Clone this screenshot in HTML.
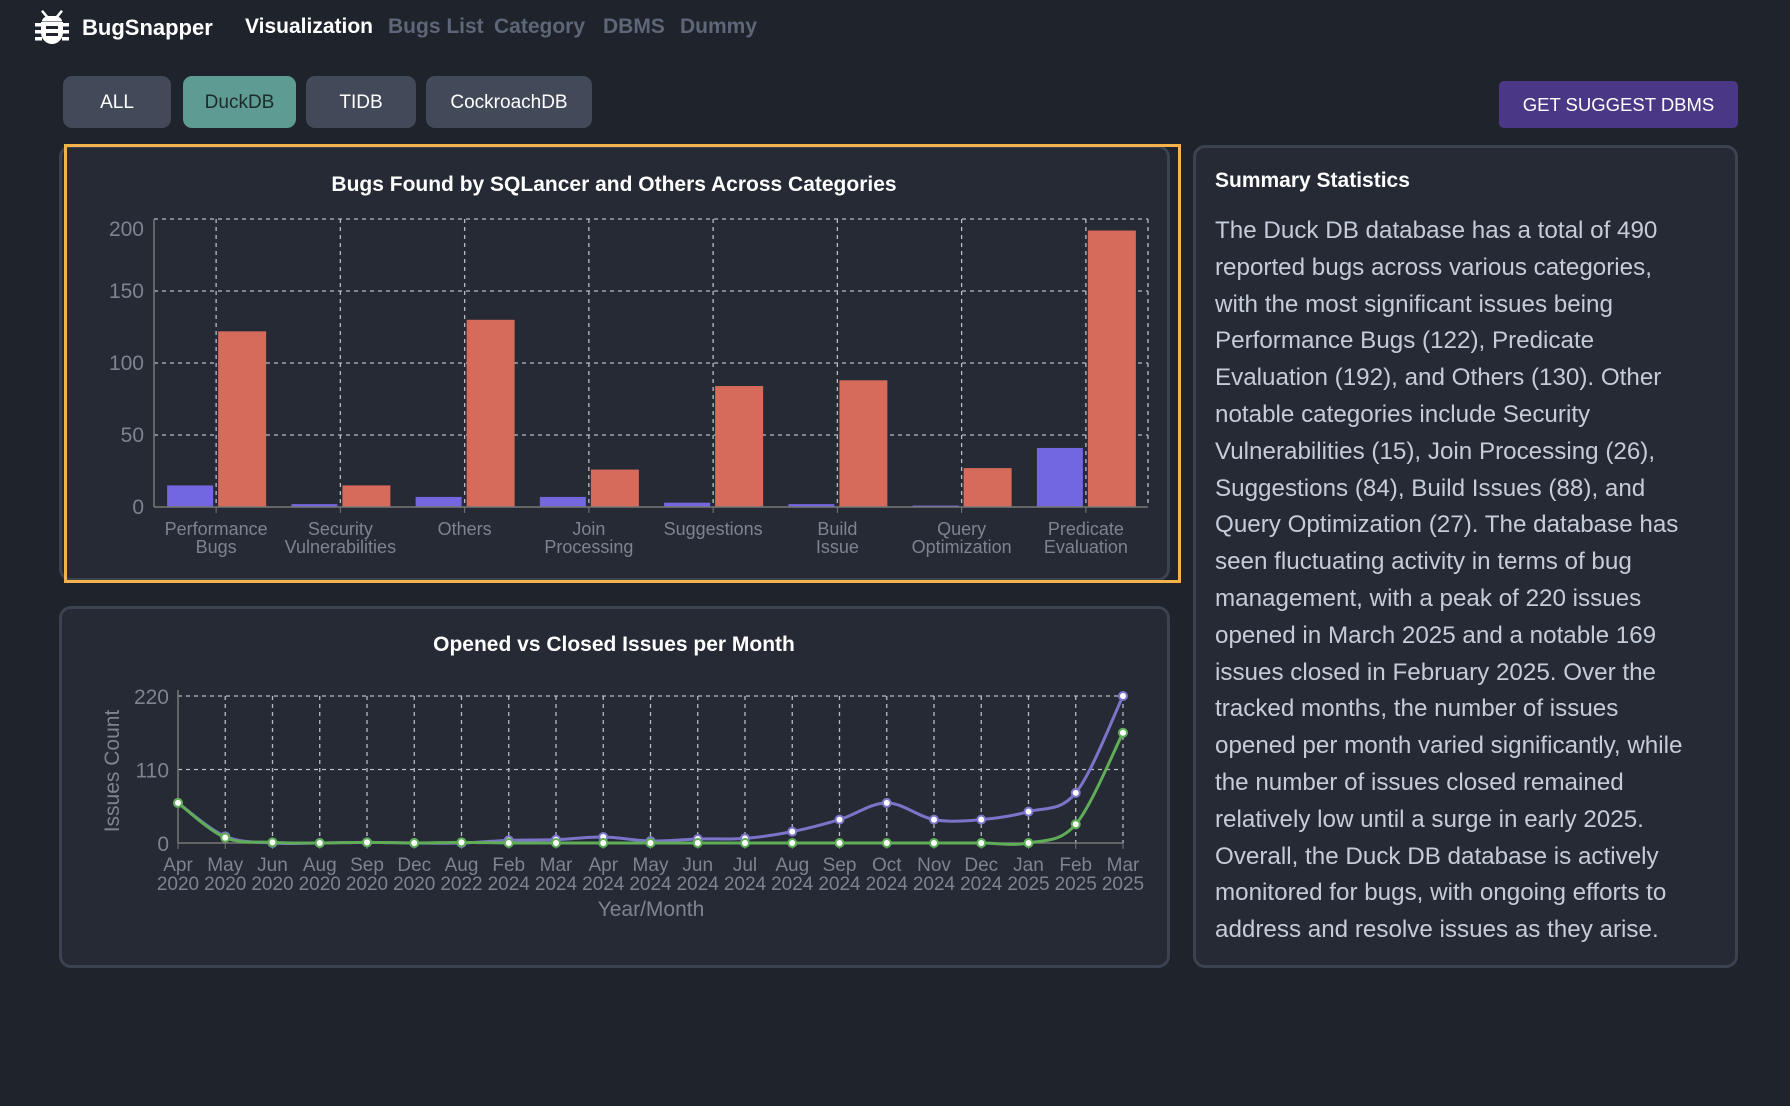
<!DOCTYPE html>
<html><head><meta charset="utf-8"><style>
*{margin:0;padding:0;box-sizing:border-box}
body{width:1790px;height:1106px;background:#1f232c;font-family:"Liberation Sans",sans-serif;position:relative;overflow:hidden;color:#fff}
.a{position:absolute}
.nav{top:15px;font-size:21px;font-weight:bold;color:#5d6778}
.btn{position:absolute;top:76px;height:52px;border-radius:9px;background:#424a59;color:#fff;font-size:19px;display:flex;align-items:center;justify-content:center;padding-top:2px}
.panel{position:absolute;background:#252a35;border:3px solid #3b4250;border-radius:12px}
.sum{position:absolute;left:1215px;top:213px;font-size:24.2px;line-height:36.8px;color:#c5ccd9;white-space:nowrap}
</style></head><body>
<svg class="a" style="left:34px;top:8px" width="36" height="38" viewBox="0 0 36 38">
<g fill="#fff"><path d="M9 2l5 6h8l5-6 2 1.5-4.5 5.5c2.5 1 3.5 2.5 3.5 4.5H8c0-2 1-3.5 3.5-4.5L7 3.5z"/>
<path d="M7 14h22v10c0 7-5 12-11 12S7 31 7 24z"/>
<rect x="1" y="15" width="6" height="3.5"/><rect x="29" y="15" width="6" height="3.5"/>
<rect x="1" y="22" width="6" height="3.5"/><rect x="29" y="22" width="6" height="3.5"/>
<rect x="1" y="29" width="7" height="3.5"/><rect x="28" y="29" width="7" height="3.5"/></g>
<rect x="12" y="18" width="12" height="3" fill="#1f232c"/><rect x="12" y="25" width="12" height="3" fill="#1f232c"/>
</svg>
<div class="a nav" style="left:82px;color:#fff;font-size:22px">BugSnapper</div>
<div class="a nav" style="left:245px;color:#fff">Visualization</div>
<div class="a nav" style="left:388px">Bugs List</div>
<div class="a nav" style="left:494px">Category</div>
<div class="a nav" style="left:603px">DBMS</div>
<div class="a nav" style="left:680px">Dummy</div>
<div class="btn" style="left:63px;width:108px">ALL</div>
<div class="btn" style="left:183px;width:113px;background:#5e9b93;color:#1d2a2a">DuckDB</div>
<div class="btn" style="left:306px;width:110px">TIDB</div>
<div class="btn" style="left:426px;width:166px">CockroachDB</div>
<div class="a" style="left:1499px;top:81px;width:239px;height:47px;background:#4a3886;border-radius:5px;color:#fff;font-size:18.5px;display:flex;align-items:center;justify-content:center">GET SUGGEST DBMS</div>

<div class="panel" style="left:59px;top:145px;width:1111px;height:436px"></div>
<div class="a" style="left:64px;top:144px;width:1117px;height:439px;border:3px solid #f3b24c"></div>
<div class="panel" style="left:59px;top:606px;width:1111px;height:362px"></div>
<div class="panel" style="left:1193px;top:145px;width:545px;height:823px"></div>
<div class="a" style="left:1215px;top:169px;font-size:21px;font-weight:bold">Summary Statistics</div>
<div class="sum">The Duck DB database has a total of 490<br>reported bugs across various categories,<br>with the most significant issues being<br>Performance Bugs (122), Predicate<br>Evaluation (192), and Others (130). Other<br>notable categories include Security<br>Vulnerabilities (15), Join Processing (26),<br>Suggestions (84), Build Issues (88), and<br>Query Optimization (27). The database has<br>seen fluctuating activity in terms of bug<br>management, with a peak of 220 issues<br>opened in March 2025 and a notable 169<br>issues closed in February 2025. Over the<br>tracked months, the number of issues<br>opened per month varied significantly, while<br>the number of issues closed remained<br>relatively low until a surge in early 2025.<br>Overall, the Duck DB database is actively<br>monitored for bugs, with ongoing efforts to<br>address and resolve issues as they arise.</div>

<svg id="c" class="a" style="left:0;top:0" width="1790" height="1106" font-family="Liberation Sans, sans-serif">
<text x="614" y="191" text-anchor="middle" fill="#fff" font-size="21" font-weight="bold">Bugs Found by SQLancer and Others Across Categories</text>
<text x="614" y="651" text-anchor="middle" fill="#fff" font-size="21" font-weight="bold">Opened vs Closed Issues per Month</text>
<text x="651" y="916" text-anchor="middle" fill="#7d8390" font-size="21">Year/Month</text>
<text transform="translate(119,771) rotate(-90)" text-anchor="middle" fill="#7d8390" font-size="21">Issues Count</text>
</svg>
<script>
var s=document.getElementById('c'),h='';
function L(x1,y1,x2,y2,st){h+='<line x1="'+x1+'" y1="'+y1+'" x2="'+x2+'" y2="'+y2+'" '+st+'/>';}
function T(x,y,t,a,fs,c){h+='<text x="'+x+'" y="'+y+'" text-anchor="'+(a||'middle')+'" font-size="'+(fs||18)+'" fill="'+(c||'#7d8390')+'">'+t+'</text>';}
var D='stroke="#b9bcc4" stroke-width="1.3" stroke-dasharray="4 4"';
var x0=154,x1=1148,y0=507,k=1.44,cw=(x1-x0)/8;
[0,50,100,150,200].forEach(function(v){var y=y0-v*k;if(v)L(x0,y,x1,y,D);T(144,y+7+(v==200?10:0),v,'end',21);});
for(var i=0;i<=8;i++){var x=x0+cw*(i+.5);if(i<8)L(x,219,x,y0,D);}
L(x1,219,x1,y0,D);
var P=[15,2,7,7,3,2,1,41],R=[122,15,130,26,84,88,27,192];
var lab=[['Performance','Bugs'],['Security','Vulnerabilities'],['Others',''],['Join','Processing'],['Suggestions',''],['Build','Issue'],['Query','Optimization'],['Predicate','Evaluation']];
for(i=0;i<8;i++){var c=x0+cw*(i+.5);
h+='<rect x="'+(c-49)+'" y="'+(y0-P[i]*k)+'" width="46" height="'+P[i]*k+'" fill="#7367e0"/>';
h+='<rect x="'+(c+2)+'" y="'+(y0-R[i]*k)+'" width="48" height="'+R[i]*k+'" fill="#d66b5c"/>';
L(c,y0,c,y0+6,'stroke="#777"');T(c,535,lab[i][0],0,18);T(c,553,lab[i][1],0,18);}
L(x0,219,x0,y0,'stroke="#777" stroke-width="1.5"');L(x0,y0,x1,y0,'stroke="#777" stroke-width="1.5"');
var X0=178,X1=1123,Y0=843,Y220=696,sp=(X1-X0)/20,kk=(Y0-Y220)/220;
[0,110,220].forEach(function(v){var y=Y0-v*kk;if(v)L(X0,y,X1,y,D);T(169,y+8,v,'end',21);});
var m=['Apr','May','Jun','Aug','Sep','Dec','Aug','Feb','Mar','Apr','May','Jun','Jul','Aug','Sep','Oct','Nov','Dec','Jan','Feb','Mar'];
var yr=['2020','2020','2020','2020','2020','2020','2022','2024','2024','2024','2024','2024','2024','2024','2024','2024','2024','2024','2025','2025','2025'];
for(i=0;i<21;i++){var x=X0+sp*i;if(i)L(x,Y220,x,Y0,D);L(x,Y0,x,Y0+6,'stroke="#777"');T(x,871,m[i],0,19);T(x,890,yr[i],0,19);}
L(X0,Y220-6,X0,Y0,'stroke="#777" stroke-width="1.5"');L(X0,Y0,X1,Y0,'stroke="#777" stroke-width="1.5"');
function curve(v,col){var p=v.map(function(a,i){return[X0+sp*i,Y0-a*kk]});var d='M'+p[0];
for(var i=0;i<p.length-1;i++){var a=p[i-1]||p[i],b=p[i],c=p[i+1],e=p[i+2]||c;
d+='C'+(b[0]+(c[0]-a[0])/6)+','+(b[1]+(c[1]-a[1])/6)+' '+(c[0]-(e[0]-b[0])/6)+','+(c[1]-(e[1]-b[1])/6)+' '+c[0]+','+c[1];}
h+='<path d="'+d+'" fill="none" stroke="'+col+'" stroke-width="3"/>';
p.forEach(function(q){h+='<circle cx="'+q[0]+'" cy="'+q[1]+'" r="4" fill="#fff" stroke="'+col+'" stroke-width="2"/>';});}
curve([60,10,0,0,1,0,0,4,5,9,3,6,7,17,35,60,35,35,47,75,220],'#7b74c9');
curve([60,8,1,0,1,0,1,0,0,0,0,0,0,0,0,0,0,0,0,28,165],'#5fae57');
s.insertAdjacentHTML('beforeend',h);
</script>
</body></html>
